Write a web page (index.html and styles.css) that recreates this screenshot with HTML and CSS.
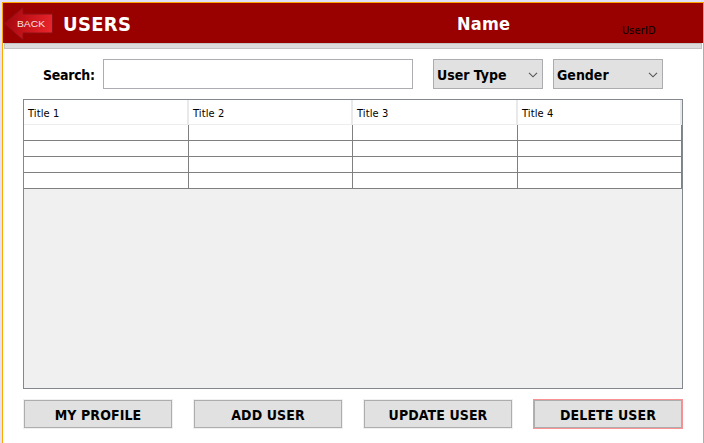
FILE: index.html
```html
<!DOCTYPE html>
<html lang="en">
<head>
<meta charset="utf-8">
<title>Users</title>
<link rel="stylesheet" href="styles.css">
</head>
<body>
<main class="window">
  <header class="header">
    <svg class="back" width="50" height="36" viewBox="0 0 50 36" role="img" aria-label="Back">
      <defs>
        <linearGradient id="arrow" x1="0" y1="0.3" x2="1" y2="0.5">
          <stop offset="0" stop-color="#a0060e"/>
          <stop offset="0.45" stop-color="#c41219"/>
          <stop offset="1" stop-color="#e8252b"/>
        </linearGradient>
      </defs>
      <path d="M1 17.5 20 1.5V8H49.5V27H20V34Z" fill="url(#arrow)" stroke="#8c1015"/>
      <text x="14" y="20.5" textLength="28" lengthAdjust="spacingAndGlyphs">BACK</text>
    </svg>
    <h1 class="title"><span>USERS</span></h1>
    <div class="name">Name</div>
    <div class="user-id">UserID</div>
  </header>
  <div class="divider"></div>
  <section class="filters">
    <label class="label" for="search">Search:</label>
    <input class="search" id="search" type="text">
    <div class="select"><span class="user-type">User Type</span><svg width="10" height="6" viewBox="0 0 10 6"><path d="M1 .8 5 4.8 9 .8"/></svg></div>
    <div class="select"><span class="gender">Gender</span><svg width="10" height="6" viewBox="0 0 10 6"><path d="M1 .8 5 4.8 9 .8"/></svg></div>
  </section>
  <section class="table">
    <div class="row head"><div>Title 1</div><div>Title 2</div><div>Title 3</div><div>Title 4</div></div>
    <div class="row"><div></div><div></div><div></div><div></div></div>
    <div class="row"><div></div><div></div><div></div><div></div></div>
    <div class="row"><div></div><div></div><div></div><div></div></div>
    <div class="row"><div></div><div></div><div></div><div></div></div>
  </section>
  <footer class="actions">
    <button class="button">MY PROFILE</button>
    <button class="button">ADD USER</button>
    <button class="button">UPDATE USER</button>
    <button class="button danger">DELETE USER</button>
  </footer>
</main>
</body>
</html>
```
FILE: styles.css
```css
* { box-sizing: border-box; }
body {
  margin: 0;
  height: 443px;
  overflow: hidden;
  padding: 2px 0 0 2px;
  background: #e1e1fa;
  color: #000;
  font: bold 14px/18px Tahoma, "DejaVu Sans Condensed", "Noto Sans", sans-serif;
}
.window {
  height: 441px;
  border: 1px solid #ffa500;
  border-bottom: 0;
  background: #fff;
}
.header {
  display: flex;
  height: 40px;
  background: #990000;
  color: #fff;
}
.back { flex: none; margin-top: 3px; }
.back text { font: 9.5px "Liberation Sans", sans-serif; fill: #fbe4e4; }
.title, .name { margin: 0; font-size: 18px; line-height: 22px; padding-top: 10px; white-space: nowrap; }
.title { width: 404px; padding-left: 10px; font-size: 20px; letter-spacing: .3px; }
.name { width: 165px; letter-spacing: .2px; }
.user-id { padding-top: 21px; font-size: 11px; line-height: 14px; font-weight: normal; letter-spacing: .1px; color: #000; }
.divider { height: 6px; margin: 0 1px; border: 1px solid #c3c3c3; background: #dcdcdc; }
.filters { display: flex; height: 30px; margin: 10px 0 0 40px; }
.label { width: 60px; padding-top: 7px; letter-spacing: -.3px; }
.search { width: 310px; height: 30px; margin: 0 20px 0 0; border: 1px solid #abadb3; background: #fff; outline: 0; }
.select {
  display: flex;
  align-items: center;
  justify-content: space-between;
  width: 110px;
  margin-right: 10px;
  padding: 1px 4px 0 3px;
  border: 1px solid #acacb0;
  background: #e1e1e1;
  white-space: nowrap;
}
.select path { fill: none; stroke: #555; stroke-width: 1.1; }
.table { width: 660px; height: 290px; margin: 10px 0 0 20px; border: 1px solid #828790; background: #f0f0f0; }
.row { display: grid; grid-template-columns: 165px 164px 165px 164px; height: 16px; }
.row div { border-right: 1px solid #808080; border-bottom: 1px solid #808080; background: #fff; }
.row.head { height: 25px; }
.row.head div { padding: 7px 0 0 4px; border-right: 2px solid #e9e9ec; border-bottom: 1px solid #ededf0; font-size: 11px; line-height: 14px; font-weight: normal; letter-spacing: .1px; }
.actions { display: flex; gap: 20px; margin: 10px 0 0 20px; }
.button {
  width: 150px;
  height: 30px;
  padding: 1px 0 0;
  border: 1px solid #f0f0f0;
  background: #e1e1e1;
  box-shadow: inset 0 0 0 1px #adadad;
  color: #000;
  font: inherit;
  letter-spacing: .1px;
}
.button.danger { border-color: #fa9294; }
```
